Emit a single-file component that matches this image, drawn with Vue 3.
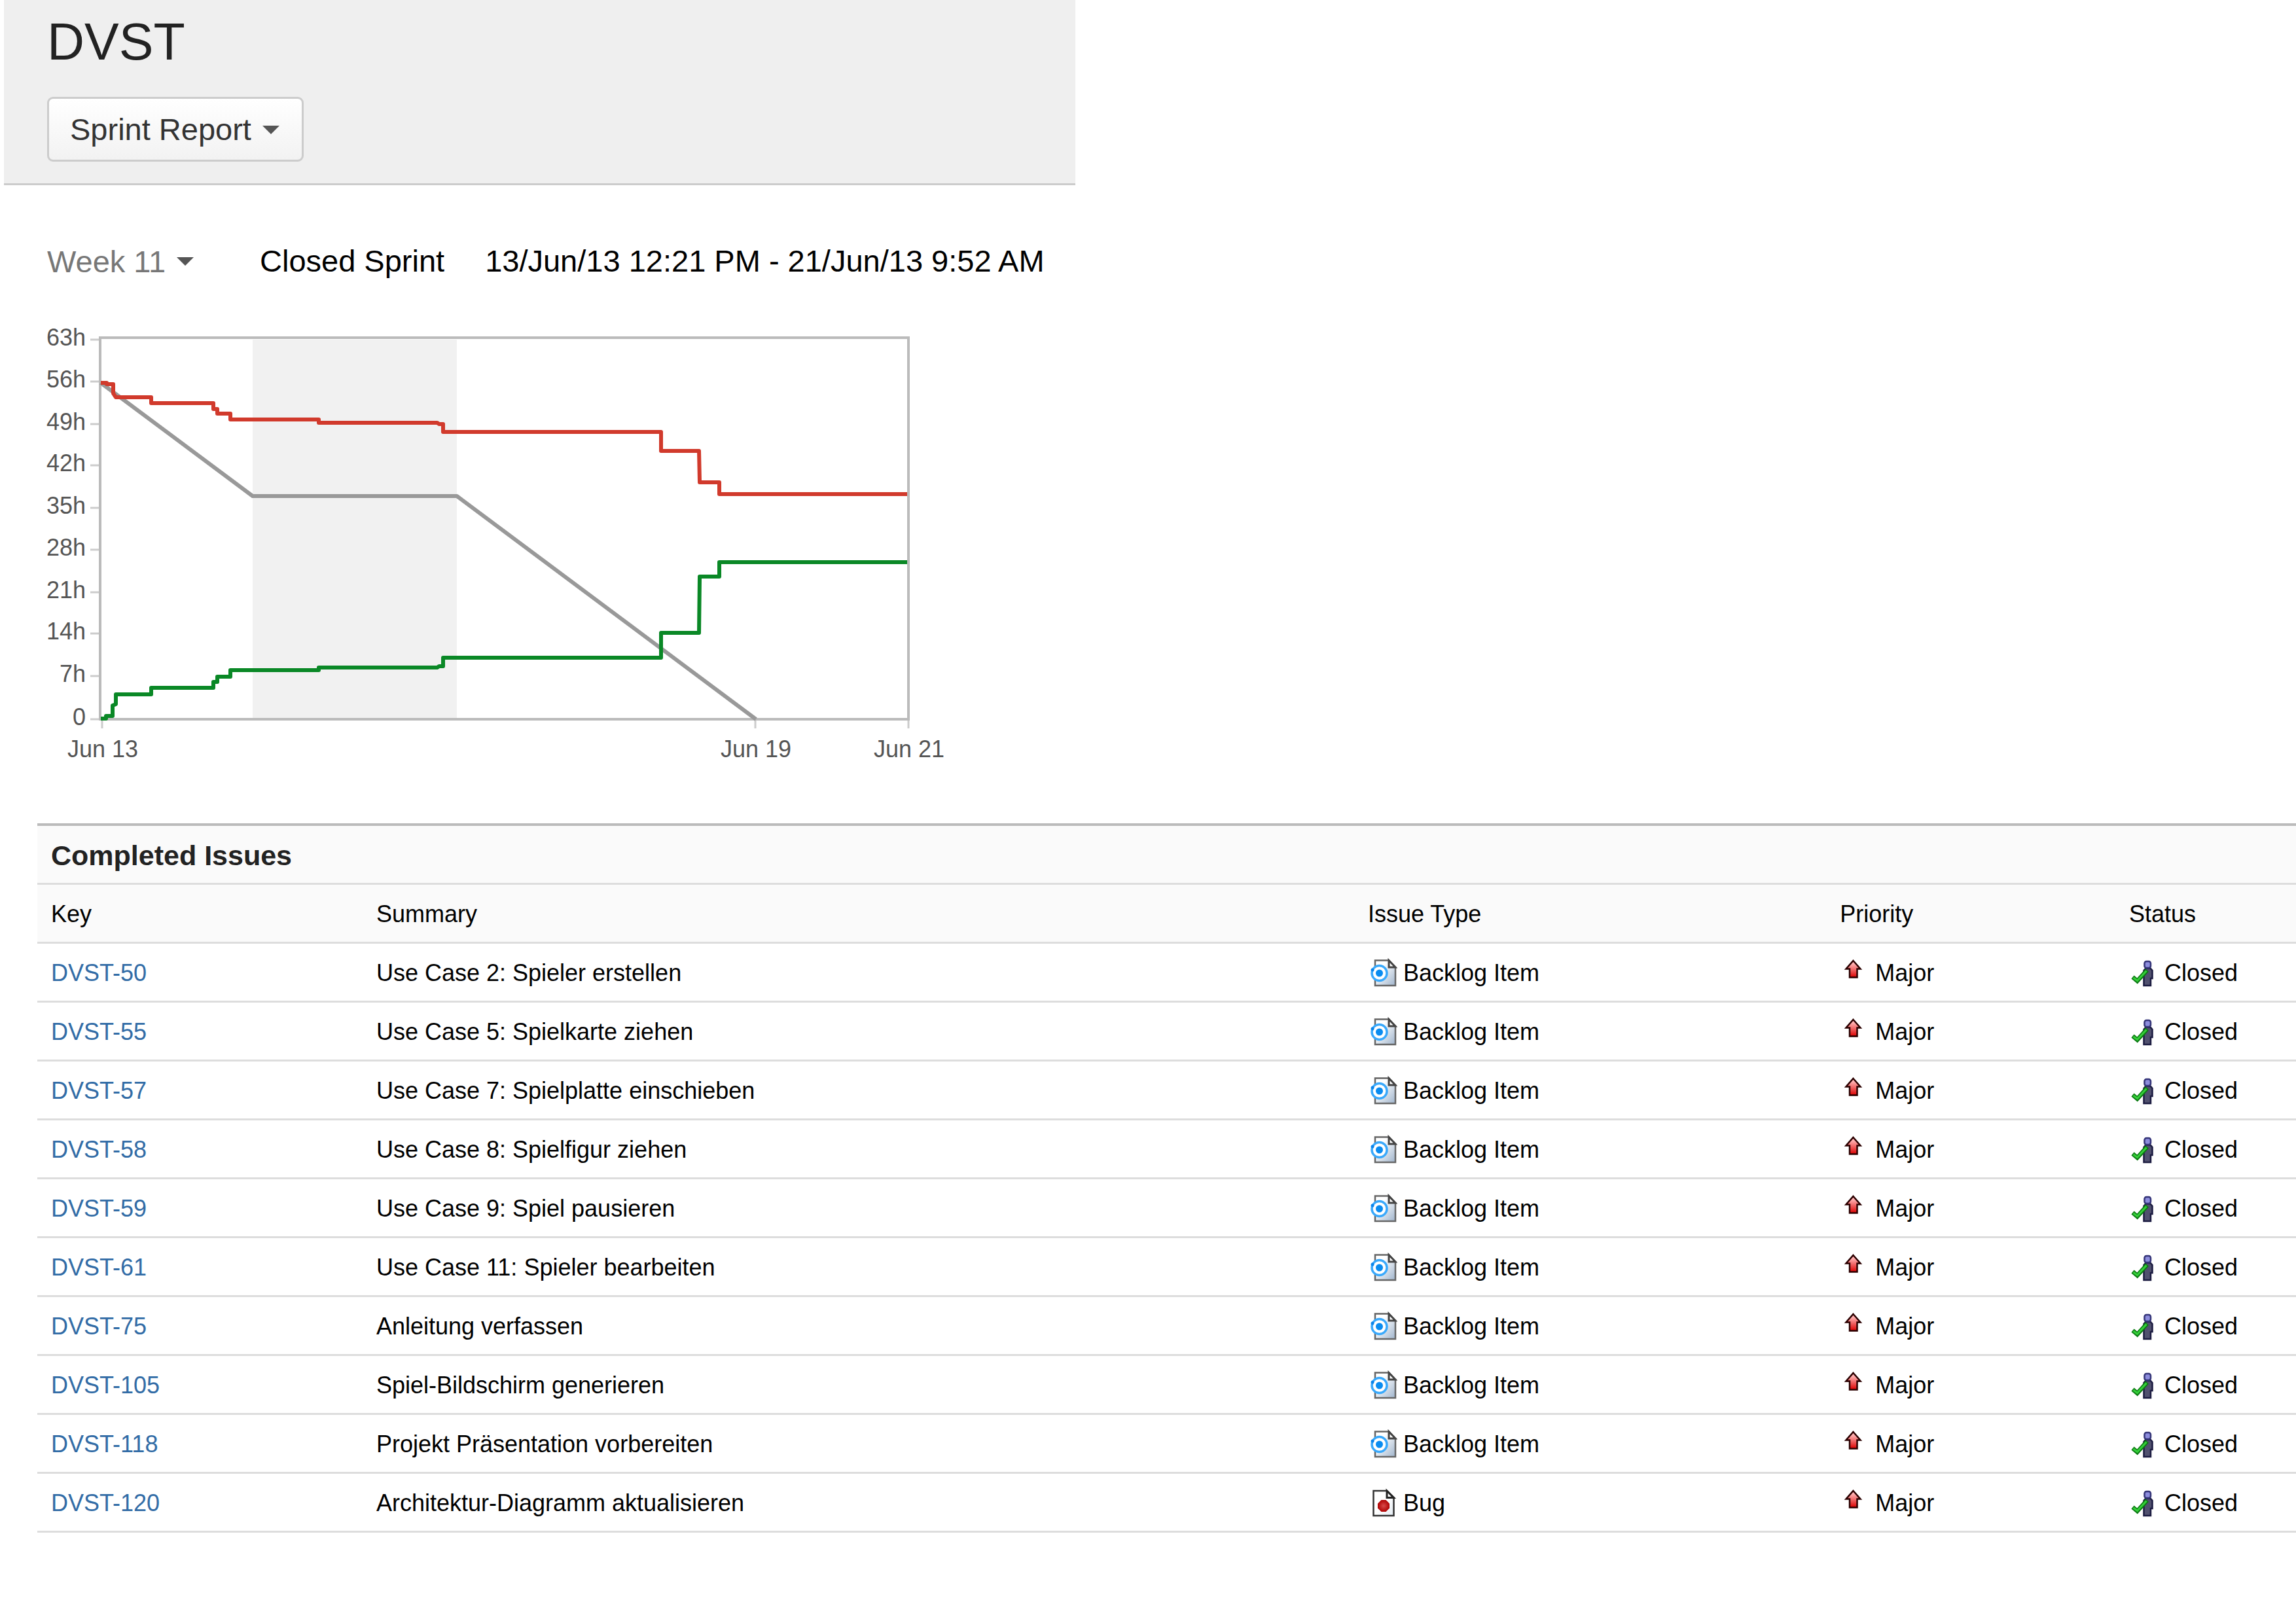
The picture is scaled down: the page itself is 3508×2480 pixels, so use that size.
<script setup>
import { ref } from 'vue'

const report = ref('Sprint Report')
const sprint = ref('Week 11')

const yTicks = [
  { y: 518, label: '63h' },
  { y: 582, label: '56h' },
  { y: 647, label: '49h' },
  { y: 710, label: '42h' },
  { y: 775, label: '35h' },
  { y: 839, label: '28h' },
  { y: 904, label: '21h' },
  { y: 967, label: '14h' },
  { y: 1032, label: '7h' },
  { y: 1098, label: '0' },
]

const xTicks = [
  { x: 156, label: 'Jun 13' },
  { x: 1154, label: 'Jun 19' },
  { x: 1388, label: 'Jun 21' },
]

const guideline = '154,584 386,757 698,757 1155,1098'

const remaining =
  '154,584 163,584 163,586 173,586 173,600 177,606 231,606 231,615 326,615 326,624 332,624 332,631 ' +
  '352,631 352,640 487,640 487,645 668,645 671,647 677,647 677,659 1010,659 1010,688 1068,688 ' +
  '1069,736 1099,736 1099,754 1386,754'

const logged =
  '154,1097 162,1097 162,1093 172,1093 172,1077 177,1075 177,1060 231,1060 231,1050 326,1050 326,1041 ' +
  '332,1041 332,1033 352,1033 352,1023 487,1023 487,1019 668,1019 671,1017 677,1017 677,1004 ' +
  '1010,1004 1010,966 1068,966 1069,880 1099,880 1099,858 1386,858'

const issues = [
  { key: 'DVST-50', summary: 'Use Case 2: Spieler erstellen', type: 'Backlog Item' },
  { key: 'DVST-55', summary: 'Use Case 5: Spielkarte ziehen', type: 'Backlog Item' },
  { key: 'DVST-57', summary: 'Use Case 7: Spielplatte einschieben', type: 'Backlog Item' },
  { key: 'DVST-58', summary: 'Use Case 8: Spielfigur ziehen', type: 'Backlog Item' },
  { key: 'DVST-59', summary: 'Use Case 9: Spiel pausieren', type: 'Backlog Item' },
  { key: 'DVST-61', summary: 'Use Case 11: Spieler bearbeiten', type: 'Backlog Item' },
  { key: 'DVST-75', summary: 'Anleitung verfassen', type: 'Backlog Item' },
  { key: 'DVST-105', summary: 'Spiel-Bildschirm generieren', type: 'Backlog Item' },
  { key: 'DVST-118', summary: 'Projekt Präsentation vorbereiten', type: 'Backlog Item' },
  { key: 'DVST-120', summary: 'Architektur-Diagramm aktualisieren', type: 'Bug' },
]
</script>

<template>
  <div class="page">
    <header class="board-header">
      <h1>DVST</h1>
      <div class="picker report-picker">
        <select v-model="report" aria-label="Report">
          <option>Sprint Report</option>
        </select>
      </div>
    </header>

    <main>
      <div class="sprint-bar">
        <div class="picker sprint-picker">
          <select v-model="sprint" aria-label="Sprint">
            <option>Week 11</option>
          </select>
        </div>
        <div class="sprint-info">
          <span>Closed Sprint</span>
          <span>13/Jun/13 12:21 PM - 21/Jun/13 9:52 AM</span>
        </div>
      </div>

      <svg class="chart" viewBox="60 490 1400 690" role="img" aria-label="Burndown chart">
        <rect class="weekend" x="386" y="518" width="312" height="578" />
        <g class="ticks">
          <line v-for="t in yTicks" :key="t.label" x1="138" :y1="t.y" x2="152" :y2="t.y" />
          <line v-for="t in xTicks" :key="t.label" :x1="t.x" y1="1099" :x2="t.x" y2="1112" />
        </g>
        <rect class="frame" x="153" y="515" width="1235" height="583" />
        <polyline class="guideline" :points="guideline" />
        <polyline class="remaining" :points="remaining" />
        <polyline class="logged" :points="logged" />
        <g class="labels">
          <text v-for="t in yTicks" :key="t.label" x="131" :y="t.y + 9" text-anchor="end">{{ t.label }}</text>
          <text v-for="t in xTicks" :key="t.label" :x="t.x + 1" y="1156" text-anchor="middle">{{ t.label }}</text>
        </g>
      </svg>

      <section class="issues">
        <h2 id="completed">Completed Issues</h2>
        <table aria-labelledby="completed">
          <colgroup>
            <col class="c-key" />
            <col class="c-summary" />
            <col class="c-type" />
            <col class="c-priority" />
            <col class="c-status" />
          </colgroup>
          <thead>
            <tr>
              <th scope="col">Key</th>
              <th scope="col">Summary</th>
              <th scope="col">Issue Type</th>
              <th scope="col">Priority</th>
              <th scope="col">Status</th>
            </tr>
          </thead>
          <tbody>
            <tr v-for="issue in issues" :key="issue.key">
              <td><a href="#">{{ issue.key }}</a></td>
              <td>{{ issue.summary }}</td>
              <td>
                <div class="with-icon">
                  <svg v-if="issue.type === 'Bug'" class="icon" viewBox="0 0 45 45" aria-hidden="true">
                    <path d="M8.5 4H29L39.500 14.500V42H8.500Z" fill="url(#bug-page)" stroke="#333" stroke-width="2.500" />
                    <path d="M29 4V14.500H39.500Z" fill="#fff" stroke="#222" stroke-width="3" />
                    <path d="M20.500 18H27.500L33 23.500V30.500L27.500 36H20.500L15 30.500V23.500Z" fill="url(#bug-dot)" />
                  </svg>
                  <svg v-else class="icon" viewBox="0 0 45 45" aria-hidden="true">
                    <path d="M11 3.500H32L42 14V42H11Z" fill="url(#item-page)" stroke="#666" stroke-width="2.500" />
                    <path d="M32 3.500V14H42Z" fill="#fff" stroke="#444" stroke-width="3" />
                    <circle cx="17.500" cy="23" r="11.500" fill="#fff" stroke="#3aa9fb" stroke-width="3.500" />
                    <circle cx="17.500" cy="23" r="5.500" fill="#0a8cf0" />
                    <circle cx="7" cy="18" r="2.500" fill="#0a84ea" />
                  </svg>
                  <span>{{ issue.type }}</span>
                </div>
              </td>
              <td>
                <div class="with-icon">
                  <svg class="icon" viewBox="0 0 45 45" aria-hidden="true">
                    <path d="M20.500 4L31.500 16.500H26.500V29.500H15V16.500H9.500Z" fill="url(#arrow)" stroke="#2b0000" stroke-width="2.500" />
                  </svg>
                  <span>Major</span>
                </div>
              </td>
              <td>
                <div class="with-icon">
                  <svg class="icon" viewBox="0 0 45 45" aria-hidden="true">
                    <path d="M25.500 15.500H32.500L35.500 19V31H33V42H22.500V19Z" fill="#50506e" stroke="#1c1c42" stroke-width="2.500" />
                    <rect x="23.500" y="5" width="9.500" height="10" rx="3" fill="#8c8cdc" stroke="#353578" stroke-width="2.500" />
                    <path d="M5.500 29L12.500 35L27.500 18.500" fill="none" stroke="#0b7a12" stroke-width="6.500" />
                    <path d="M6.500 30L12.500 34.500L26.500 19.500" fill="none" stroke="#35cf3a" stroke-width="3" />
                  </svg>
                  <span>Closed</span>
                </div>
              </td>
            </tr>
          </tbody>
        </table>
      </section>
    </main>

    <svg class="defs" aria-hidden="true">
      <defs>
        <linearGradient id="item-page" x1="0" y1="0" x2="1" y2="1">
          <stop offset="0.300" stop-color="#fff" />
          <stop offset="1" stop-color="#9fb4cc" />
        </linearGradient>
        <linearGradient id="bug-page" x1="0" y1="0" x2="1" y2="1">
          <stop offset="0.500" stop-color="#fff" />
          <stop offset="1" stop-color="#e3ebf2" />
        </linearGradient>
        <radialGradient id="bug-dot">
          <stop offset="0" stop-color="#d84a4a" />
          <stop offset="1" stop-color="#b00404" />
        </radialGradient>
        <linearGradient id="arrow" x1="0" y1="0" x2="0" y2="1">
          <stop offset="0.200" stop-color="#ffb0b0" />
          <stop offset="1" stop-color="#dc0000" />
        </linearGradient>
      </defs>
    </svg>
  </div>
</template>

<style>
body {
  background: #fff;
}
</style>

<style scoped>
.page {
  font-family: "Liberation Sans", Arial, sans-serif;
  color: #000;
}

.board-header {
  box-sizing: border-box;
  width: calc(47% - 12px);
  margin-left: 6px;
  padding: 24px 66px 33px;
  background: #efefef;
  border-bottom: 3px solid #ccc;
}

h1 {
  margin: 0 0 44px;
  font-size: 79px;
  line-height: 80px;
  font-weight: 400;
  color: #222;
}

.picker {
  position: relative;
  width: fit-content;
}

.picker select {
  display: block;
  appearance: none;
  margin: 0;
  border: 0;
  background: none;
  font: inherit;
  font-size: 47px;
}

.picker::after {
  content: "";
  position: absolute;
  top: calc(50% - 6px);
  right: 0;
  border: solid transparent;
  border-width: 13px 13px 0;
  border-top-color: #555;
  pointer-events: none;
}

.report-picker select {
  height: 99px;
  padding: 0 77px 0 32px;
  border: 3px solid #ccc;
  border-radius: 9px;
  background: linear-gradient(#fff, #f2f2f2);
  color: #333;
}

.report-picker::after {
  right: 37px;
}

.sprint-picker select {
  height: 60px;
  padding: 0 42px 0 0;
  color: #777;
}

.sprint-bar {
  display: flex;
  align-items: center;
  gap: 101px;
  padding: 86px 72px 62px;
}

.sprint-info {
  display: flex;
  gap: 62px;
  font-size: 47px;
  line-height: 60px;
}

.chart {
  display: block;
  width: 1400px;
  max-width: 100%;
  margin: 0 0 77px 60px;
}

.weekend {
  fill: #f1f1f1;
}

.ticks {
  stroke: #ccc;
  stroke-width: 3;
}

.frame {
  fill: none;
  stroke: #bbb;
  stroke-width: 4;
}

.guideline,
.remaining,
.logged {
  fill: none;
  stroke-width: 6;
  stroke-linejoin: round;
}

.guideline {
  stroke: #999;
}

.remaining {
  stroke: #d13a2c;
}

.logged {
  stroke: #0a8826;
}

.labels {
  font-size: 36px;
  fill: #555;
}

.issues {
  margin-left: 57px;
}

h2 {
  box-sizing: border-box;
  height: 94px;
  margin: 0;
  padding: 0 21px;
  border-top: 4px solid #bbb;
  border-bottom: 3px solid #ddd;
  background: #fafafa;
  font-size: 43px;
  line-height: 90px;
  color: #222;
}

table {
  width: 100%;
  table-layout: fixed;
  border-collapse: separate;
  border-spacing: 0;
  font-size: 36px;
  line-height: 45px;
}

.c-key {
  width: 14.4%;
}

.c-summary {
  width: 43.9%;
}

.c-type {
  width: 20.9%;
}

.c-priority {
  width: 12.8%;
}

.c-status {
  width: 8%;
}

th,
td {
  box-sizing: border-box;
  height: 90px;
  padding: 2px 0 0 21px;
  border-bottom: 3px solid #ddd;
  text-align: left;
  vertical-align: middle;
  font-weight: 400;
  white-space: nowrap;
}

th {
  background: #fafafa;
}

a {
  color: #326ca6;
  text-decoration: none;
}

.with-icon {
  display: flex;
  align-items: center;
  gap: 9px;
}

.icon {
  width: 45px;
  height: 45px;
  flex: none;
}

.defs {
  position: absolute;
  width: 0;
  height: 0;
}
</style>
